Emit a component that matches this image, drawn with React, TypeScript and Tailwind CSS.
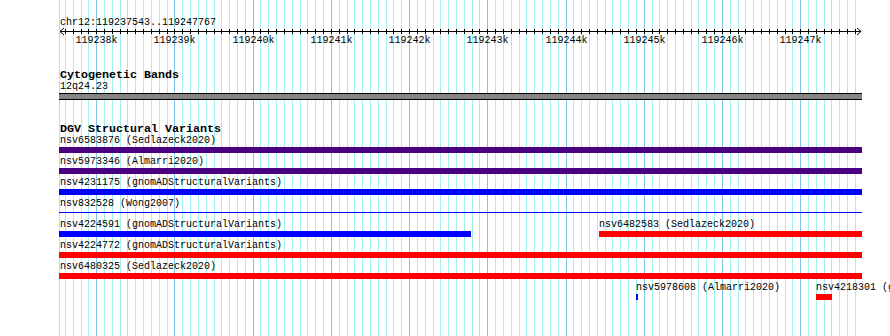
import React from 'react';

// view: screen x of a base pair, 78.22px per kb, 119238000 sits at x=96.7
const ORIGIN_BP = 119238000;
const ORIGIN_X = 96.7;
const PX_PER_BP = 0.07822;
const VIEW_LEFT = 59;
const VIEW_RIGHT = 862;

const toX = (bp: number) => ORIGIN_X + (bp - ORIGIN_BP) * PX_PER_BP;
const clampX = (x: number) => Math.min(Math.max(x, VIEW_LEFT), VIEW_RIGHT);

type Feature = {
  name: string;
  study: string;
  start: number;
  end: number;
  color: 'purple' | 'blue' | 'red';
  thin?: boolean;
};

const colorClass: Record<Feature['color'], string> = {
  purple: 'bg-[#4b0082]',
  blue: 'bg-[#0000ff]',
  red: 'bg-[#ff0000]',
};

const rows: Feature[][] = [
  [{ name: 'nsv6583876', study: 'Sedlazeck2020', start: 119230000, end: 119260000, color: 'purple' }],
  [{ name: 'nsv5973346', study: 'Almarri2020', start: 119230000, end: 119260000, color: 'purple' }],
  [{ name: 'nsv4231175', study: 'gnomADStructuralVariants', start: 119230000, end: 119260000, color: 'blue' }],
  [{ name: 'nsv832528', study: 'Wong2007', start: 119230000, end: 119260000, color: 'blue', thin: true }],
  [
    { name: 'nsv4224591', study: 'gnomADStructuralVariants', start: 119230000, end: 119242785, color: 'blue' },
    { name: 'nsv6482583', study: 'Sedlazeck2020', start: 119244422, end: 119260000, color: 'red' },
  ],
  [{ name: 'nsv4224772', study: 'gnomADStructuralVariants', start: 119230000, end: 119260000, color: 'red' }],
  [{ name: 'nsv6480325', study: 'Sedlazeck2020', start: 119230000, end: 119260000, color: 'red' }],
  [
    { name: 'nsv5978608', study: 'Almarri2020', start: 119244896, end: 119244922, color: 'blue' },
    { name: 'nsv4218301', study: 'gnomADStructuralVariants', start: 119247197, end: 119247400, color: 'red' },
  ],
];

// one tick / grid line per 100bp, a major one per kb
const ticks = Array.from({ length: 102 }, (_, i) => {
  const k = i - 4;
  return { x: Math.floor(toX(ORIGIN_BP + k * 100)), major: k % 10 === 0 };
});

const majors = Array.from({ length: 10 }, (_, m) => ({
  label: `${119238 + m}k`,
  x: Math.floor(toX(ORIGIN_BP + m * 1000)) + 0.5,
}));

function GridLines() {
  return (
    <div className="absolute inset-0 pointer-events-none">
      <div className="absolute top-0 bottom-0 w-px bg-[#b4e4e6]" style={{ left: VIEW_LEFT }} />
      {ticks.map((t) => (
        <div
          key={t.x}
          className={t.major ? 'absolute top-0 bottom-0 w-px bg-[#7fc2ec]' : 'absolute top-0 bottom-0 w-px bg-[#a2eef0]'}
          style={{ left: t.x }}
        />
      ))}
    </div>
  );
}

function Ruler() {
  const w = VIEW_RIGHT - VIEW_LEFT;
  return (
    <svg width={w} height={6} className="block overflow-visible" shapeRendering="crispEdges">
      <line x1={1} y1={2.5} x2={w - 1} y2={2.5} stroke="#000" strokeWidth={1} />
      {ticks.map((t) => (
        <line key={t.x} x1={t.x - VIEW_LEFT + 0.5} y1={0} x2={t.x - VIEW_LEFT + 0.5} y2={5} stroke="#000" strokeWidth={1} />
      ))}
      <polyline points="5,-1 1,2.5 5,6" fill="none" stroke="#000" strokeWidth={1} shapeRendering="auto" />
      <polyline points={`${w - 5},-1 ${w - 1},2.5 ${w - 5},6`} fill="none" stroke="#000" strokeWidth={1} shapeRendering="auto" />
    </svg>
  );
}

function FeatureRow({ features }: { features: Feature[] }) {
  return (
    <div className="relative h-[21px]">
      {features.map((f) => {
        const x0 = clampX(toX(f.start));
        const x1 = clampX(toX(f.end));
        const left = Math.round(x0) - VIEW_LEFT;
        const width = Math.max(2, Math.round(x1) - Math.round(x0));
        return (
          <React.Fragment key={f.name}>
            <div className="absolute top-0 whitespace-nowrap leading-[12px]" style={{ left: Math.max(left, 1) }}>
              {f.name} ({f.study})
            </div>
            <div
              className={f.thin ? `absolute top-[14px] h-px ${colorClass[f.color]}` : `absolute top-[12px] h-[6px] ${colorClass[f.color]}`}
              style={{ left, width }}
            />
          </React.Fragment>
        );
      })}
    </div>
  );
}

export default function App() {
  return (
    <div className="relative w-[890px] h-[336px] overflow-hidden bg-white text-black text-[10px] font-['Liberation_Mono','DejaVu_Sans_Mono',monospace]">
      <GridLines />
      <div className="relative z-10 ml-[59px] w-[803px] flex flex-col">
        <div className="pt-[17px] pl-px leading-[12px]">chr12:119237543..119247767</div>
        <Ruler />
        <div className="relative h-[12px] leading-[12px]">
          {majors.map((m) => (
            <div key={m.label} className="absolute top-0 w-[42px] text-center" style={{ left: m.x - VIEW_LEFT - 21 }}>
              {m.label}
            </div>
          ))}
        </div>

        <section className="mt-[22px] flex flex-col">
          <div className="pl-px font-bold text-[11.67px] leading-[12px]">Cytogenetic Bands</div>
          <div className="pl-px leading-[12px]">12q24.23</div>
          <div className="h-[7px] border-y border-black bg-[#848484]" />
        </section>

        <section className="mt-[23px] flex flex-col">
          <div className="pl-px font-bold text-[11.67px] leading-[12px]">DGV Structural Variants</div>
          {rows.map((r, i) => (
            <FeatureRow key={i} features={r} />
          ))}
        </section>
      </div>
    </div>
  );
}
